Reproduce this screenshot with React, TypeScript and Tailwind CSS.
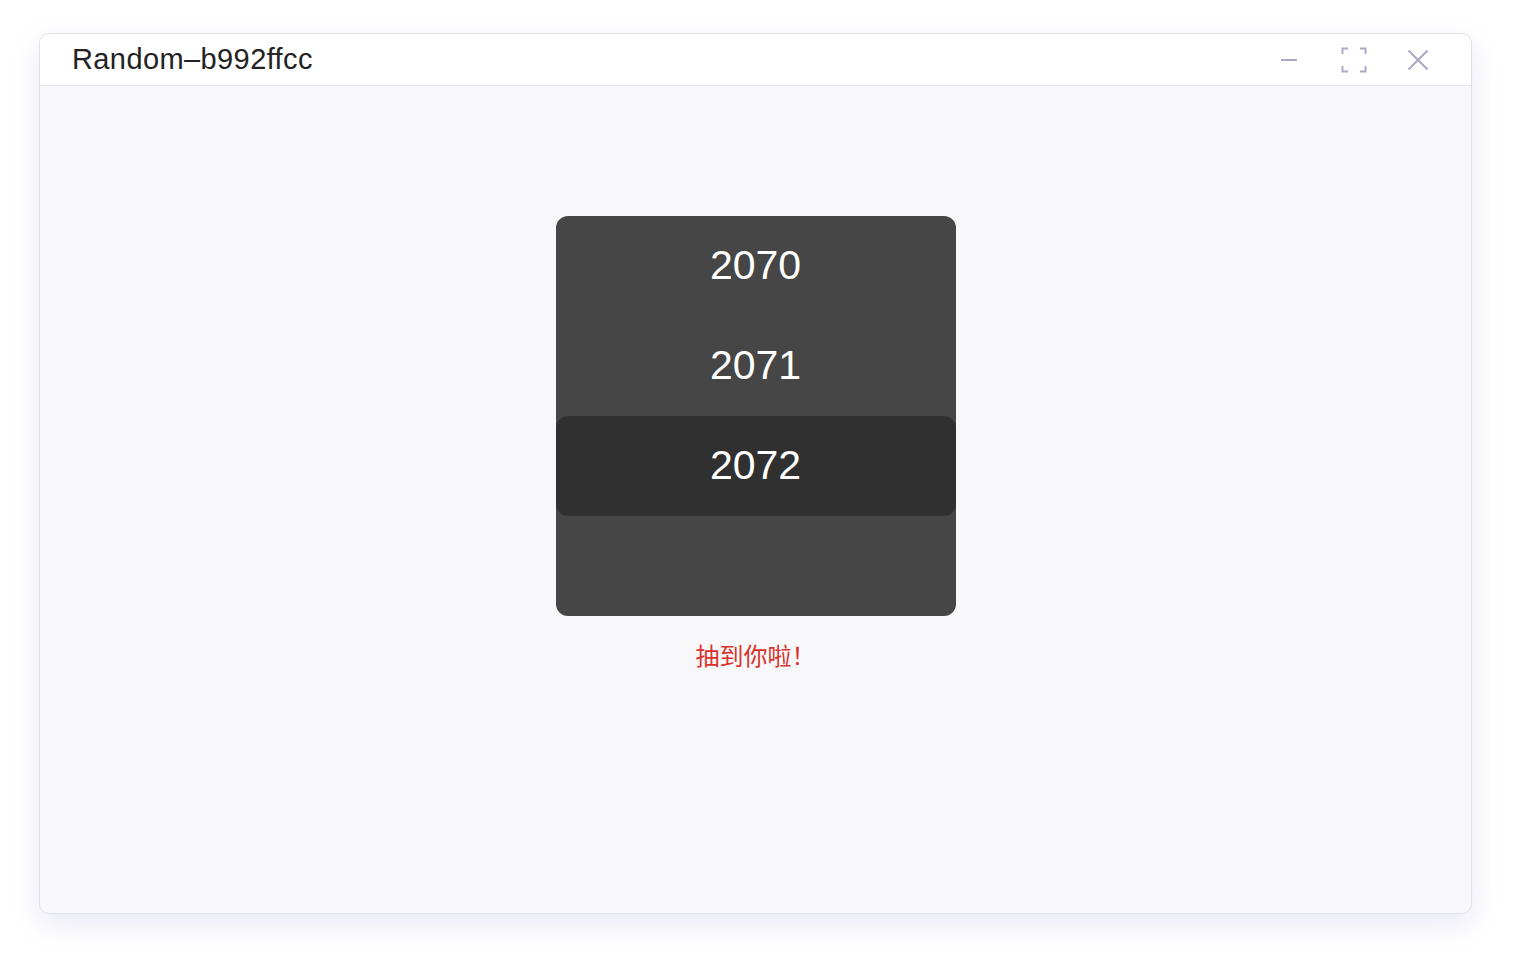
import React from "react";

const years = [2070, 2071, 2072, null];
const picked = 2;

const TitleIcons = () => (
  <div className="flex items-center gap-[40px] pr-[42px] text-[#a9a8c6]">
    <svg width="18" height="24" viewBox="0 0 18 24" className="mr-[3px]">
      <path d="M1 12h16" stroke="currentColor" strokeWidth="2" />
    </svg>
    <svg width="26" height="26" viewBox="0 0 26 26">
      <path
        d="M1.5 7V1.5H7M19 1.5h5.5V7M24.5 19v5.5H19M7 24.5H1.5V19"
        stroke="currentColor"
        strokeWidth="2"
        fill="none"
      />
    </svg>
    <svg width="22" height="22" viewBox="0 0 22 22">
      <path d="M1.5 1.5l19 19M20.5 1.5l-19 19" stroke="currentColor" strokeWidth="2" />
    </svg>
  </div>
);

const App = () => {
  return (
    <div
      className="w-[1522px] h-[956px] bg-white pt-[33px] pl-[39px]"
      style={{ fontFamily: '"Liberation Sans", "Noto Sans CJK SC", sans-serif' }}
    >
      <div className="w-[1433px] h-[881px] flex flex-col rounded-[10px] border border-[#e0e0ea] bg-[#f8f8fa] overflow-hidden shadow-[0_10px_28px_rgba(190,190,225,0.35)]">
        <div className="h-[52px] flex items-center justify-between bg-white border-b border-[#e6e6ee]">
          <span className="pl-[32px] text-[29px] leading-none text-[#222] tracking-[0.4px]">
            Random–b992ffcc
          </span>
          <TitleIcons />
        </div>
        <div className="flex-1 flex flex-col items-center pt-[130px]">
          <div className="w-[400px] h-[400px] rounded-[12px] bg-[#464646] flex flex-col">
            {years.map((y, i) => (
              <div
                key={i}
                className={`h-[100px] flex items-center justify-center text-[41px] text-white ${
                  i === picked ? "bg-[#303030] rounded-[12px]" : ""
                }`}
              >
                {y}
              </div>
            ))}
          </div>
          <div className="mt-[27px] text-[24px] leading-[28px] text-[#d9332c]">抽到你啦！</div>
        </div>
      </div>
    </div>
  );
};

export default App;
